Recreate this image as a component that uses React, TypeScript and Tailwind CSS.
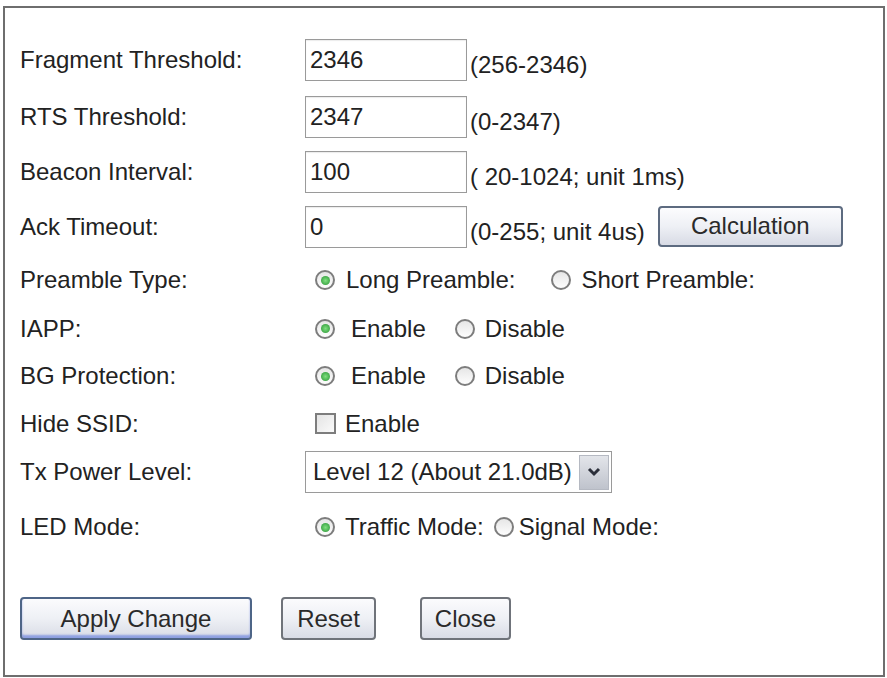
import React from 'react';

const font = { fontFamily: '"Liberation Sans", Arial, sans-serif' };

function TextBox({ value }: { value: string }) {
  return (
    <div className="w-[162px] h-[42px] border border-[#9a9a9a] bg-white flex items-center pl-[4px] text-[24px] text-[#222] shadow-[inset_0_1px_1px_rgba(0,0,0,0.08)]">
      {value}
    </div>
  );
}

function Radio({ checked }: { checked?: boolean }) {
  return (
    <span className="w-[20px] h-[20px] rounded-full border-2 border-[#7d7d7d] bg-gradient-to-b from-[#e6e6e6] to-[#fdfdfd] flex items-center justify-center flex-shrink-0">
      {checked && <span className="w-[9px] h-[9px] rounded-full bg-[radial-gradient(circle,#7fe07f_0%,#2f9a3a_90%)]" />}
    </span>
  );
}

function Btn({ label, w, primary }: { label: string; w: string; primary?: boolean }) {
  return (
    <div
      className={`${w} h-[43px] rounded-[4px] border-2 flex items-center justify-center text-[24px] text-[#2a2a2a] bg-gradient-to-b from-[#fbfbfd] via-[#eef0f5] to-[#d9dce6] ${
        primary ? 'border-[#4e6587] shadow-[inset_0_-3px_2px_rgba(80,110,220,0.55)]' : 'border-[#6f737a]'
      }`}
    >
      {label}
    </div>
  );
}

const rows = [
  { label: 'Fragment Threshold:', h: 'h-[56px]' },
  { label: 'RTS Threshold:', h: 'h-[57px]' },
  { label: 'Beacon Interval:', h: 'h-[54px]' },
  { label: 'Ack Timeout:', h: 'h-[56px]' },
  { label: 'Preamble Type:', h: 'h-[50px]' },
  { label: 'IAPP:', h: 'h-[47px]' },
  { label: 'BG Protection:', h: 'h-[48px]' },
  { label: 'Hide SSID:', h: 'h-[47px]' },
  { label: 'Tx Power Level:', h: 'h-[50px]' },
  { label: 'LED Mode:', h: 'h-[60px]' },
];

function Control({ i }: { i: number }) {
  switch (i) {
    case 0:
      return (
        <div className="flex items-end gap-[3px]">
          <TextBox value="2346" />
          <span className="pb-[4px] text-[24px]">(256-2346)</span>
        </div>
      );
    case 1:
      return (
        <div className="flex items-end gap-[3px]">
          <TextBox value="2347" />
          <span className="pb-[4px] text-[24px]">(0-2347)</span>
        </div>
      );
    case 2:
      return (
        <div className="flex items-end gap-[3px]">
          <TextBox value="100" />
          <span className="pb-[4px] text-[24px]">( 20-1024; unit 1ms)</span>
        </div>
      );
    case 3:
      return (
        <div className="flex items-end">
          <TextBox value="0" />
          <span className="pb-[4px] pl-[3px] text-[24px]">(0-255; unit 4us)</span>
          <div className="ml-[13px] w-[185px] h-[41px] rounded-[4px] border-2 border-[#5d6b80] flex items-center justify-center text-[24px] text-[#2a2a2a] bg-gradient-to-b from-[#fcfcfe] via-[#eef0f5] to-[#d8dbe5] self-center -translate-y-[1px]">
            Calculation
          </div>
        </div>
      );
    case 4:
      return (
        <div className="flex items-center pl-[10px]">
          <Radio checked />
          <span className="ml-[11px]">Long Preamble:</span>
          <span className="ml-[36px]"><Radio /></span>
          <span className="ml-[10px]">Short Preamble:</span>
        </div>
      );
    case 5:
    case 6:
      return (
        <div className="flex items-center pl-[10px]">
          <Radio checked />
          <span className="ml-[16px]">Enable</span>
          <span className="ml-[29px]"><Radio /></span>
          <span className="ml-[10px]">Disable</span>
        </div>
      );
    case 7:
      return (
        <div className="flex items-center pl-[10px]">
          <span className="w-[21px] h-[21px] border-2 border-[#7d7d7d] bg-gradient-to-br from-[#e4e4e4] to-[#fafafa]" />
          <span className="ml-[9px]">Enable</span>
        </div>
      );
    case 8:
      return (
        <div className="w-[307px] h-[42px] border border-[#9a9a9a] bg-white flex items-center justify-between pl-[7px] pr-[2px]">
          <span>Level 12 (About 21.0dB)</span>
          <span className="w-[30px] h-[35px] border border-[#b5b9c2] bg-gradient-to-b from-[#e3e5ea] to-[#bfc3cc] flex items-center justify-center">
            <svg width="14" height="10" viewBox="0 0 14 10">
              <path d="M2 2 L7 7 L12 2" fill="none" stroke="#2b2f3a" strokeWidth="3" />
            </svg>
          </span>
        </div>
      );
    default:
      return (
        <div className="flex items-center pl-[10px]">
          <Radio checked />
          <span className="ml-[10px]">Traffic Mode:</span>
          <span className="ml-[10px]"><Radio /></span>
          <span className="ml-[5px]">Signal Mode:</span>
        </div>
      );
  }
}

export default function App() {
  return (
    <div className="w-[887px] h-[678px] bg-white pt-[6px] pl-[3px] text-[#222] text-[24px] leading-none" style={font}>
      <div className="w-[882px] h-[671px] border-2 border-[#6e6e6e] pt-[24px] pl-[15px]">
        {rows.map((r, i) => (
          <div key={r.label} className={`${r.h} flex items-center`}>
            <div className="w-[285px]">{r.label}</div>
            <Control i={i} />
          </div>
        ))}
        <div className="mt-[40px] flex items-center">
          <Btn label="Apply Change" w="w-[232px]" primary />
          <div className="ml-[29px]"><Btn label="Reset" w="w-[95px]" /></div>
          <div className="ml-[44px]"><Btn label="Close" w="w-[91px]" /></div>
        </div>
      </div>
    </div>
  );
}
